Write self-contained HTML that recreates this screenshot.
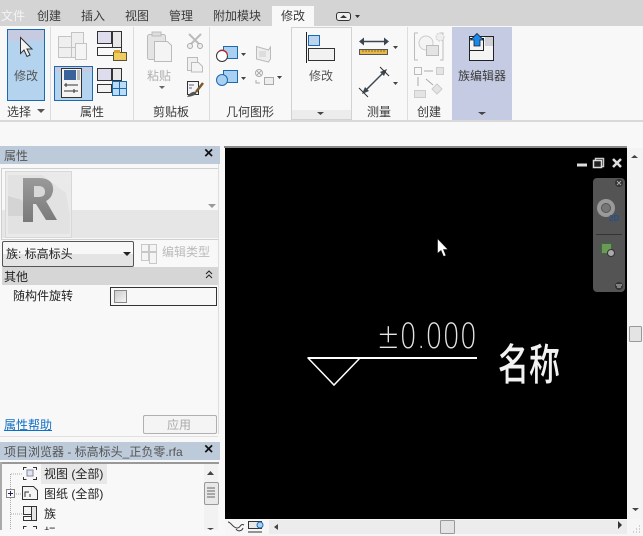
<!DOCTYPE html>
<html><head><meta charset="utf-8">
<style>
html,body{margin:0;padding:0;width:643px;height:536px;overflow:hidden;background:#f8f8f8}
body{position:relative;font-family:"Liberation Sans","Noto Sans CJK SC",sans-serif;font-size:12px;color:#333}
.a{position:absolute}
.t{position:absolute;white-space:nowrap;line-height:14px;font-size:12px;color:#3a3a3a}
svg{position:absolute;overflow:visible}
</style></head><body>

<!-- tab bar -->
<div class="a" style="left:0;top:0;width:643px;height:26px;background:#d4d4d4"></div>
<div class="a" style="left:272px;top:6px;width:42px;height:20px;background:#f8f8f8"></div>
<div class="t" style="left:1px;top:9px;color:#f4f4f4">文件</div>
<div class="t" style="left:37px;top:9px">创建</div>
<div class="t" style="left:81px;top:9px">插入</div>
<div class="t" style="left:125px;top:9px">视图</div>
<div class="t" style="left:169px;top:9px">管理</div>
<div class="t" style="left:213px;top:9px">附加模块</div>
<div class="t" style="left:281px;top:9px">修改</div>
<svg style="left:0;top:0" width="643" height="26"><rect x="336.500" y="12.500" width="14" height="8" rx="2.500" fill="#eee" stroke="#333"/><path d="M340 18l3.500-3 3.500 3z" fill="#333"/><path d="M355 15h5l-2.500 3z" fill="#333"/></svg>

<!-- ribbon lines -->
<div class="a" style="left:0;top:120px;width:643px;height:2px;background:#d9d9d9"></div>
<div class="a" style="left:50px;top:27px;width:1px;height:93px;background:#dcdcdc"></div>
<div class="a" style="left:133px;top:27px;width:1px;height:93px;background:#dcdcdc"></div>
<div class="a" style="left:209px;top:27px;width:1px;height:93px;background:#dcdcdc"></div>
<div class="a" style="left:407px;top:27px;width:1px;height:93px;background:#dcdcdc"></div>

<!-- modify button -->
<div class="a" style="left:7px;top:29px;width:36px;height:70px;background:#b3d3ee;border:1px solid #1b69b0"></div>
<div class="a" style="left:8px;top:30px;width:36px;height:11px;background:#c6cbe2"></div>
<svg style="left:0;top:0" width="50" height="70"><path d="M20.500 37.500v16l3.500-3.500 3 6.500 3-1.500-3-6h5z" fill="#f4f4f4" stroke="#333"/></svg>
<div class="t" style="left:14px;top:69px;color:#555">修改</div>
<div class="t" style="left:7px;top:105px">选择</div>
<svg style="left:0;top:0" width="50" height="120"><path d="M37 109h8l-4 4z" fill="#555"/></svg>

<!-- properties panel -->
<div class="a" style="left:54px;top:66px;width:37px;height:33px;background:#b3d3ee;border:1px solid #1b69b0"></div>
<div class="a" style="left:55px;top:67px;width:37px;height:5px;background:#c6cbe2"></div>
<div class="t" style="left:80px;top:105px">属性</div>
<svg style="left:0;top:0" width="135" height="100">
 <g fill="#efefef" stroke="#c4c4c4"><rect x="58.500" y="36.500" width="13" height="11"/><rect x="71.500" y="32.500" width="12" height="15"/><rect x="58.500" y="47.500" width="13" height="10"/><rect x="71.500" y="47.500" width="12" height="10"/><rect x="75.500" y="43.500" width="11" height="16" fill="#f4f4f4"/></g>
 <g stroke="#333" fill="#f2f2f2"><rect x="97.500" y="31.500" width="14" height="12" fill="#dde"/><rect x="112.500" y="31.500" width="9" height="24" fill="#e8e8e8"/><rect x="97.500" y="47.500" width="24" height="8" fill="#f8f8f8"/></g>
 <rect x="113.500" y="52.500" width="13" height="8" fill="#f0cc60" stroke="#553"/><rect x="114" y="50" width="6" height="3" fill="#d9a630"/>
 <rect x="61.500" y="68.500" width="20" height="29" fill="#f4f4f4" stroke="#333"/><rect x="64" y="70" width="12" height="10" fill="#3a639b"/><rect x="77" y="70" width="3" height="10" fill="#bbb"/><path d="M64 85h14M66 83v4M64 91h14M74 89v4" stroke="#333" fill="none"/>
 <g stroke="#333" fill="#f2f2f2"><rect x="97.500" y="68.500" width="14" height="12" fill="#dde"/><rect x="112.500" y="68.500" width="9" height="12" fill="#e8e8e8"/><rect x="97.500" y="84.500" width="14" height="8"/></g>
 <g fill="#bcdcf4" stroke="#1b69b0"><rect x="112.500" y="81.500" width="7" height="7"/><rect x="119.500" y="81.500" width="7" height="7"/><rect x="112.500" y="88.500" width="7" height="7"/><rect x="119.500" y="88.500" width="7" height="7"/></g>
</svg>

<!-- clipboard -->
<svg style="left:0;top:0" width="210" height="100">
 <rect x="147.500" y="34.500" width="18" height="25" rx="2" fill="#e4e4e4" stroke="#bbb"/><rect x="152" y="32" width="9" height="4" fill="#ddd" stroke="#bbb"/><path d="M154.500 41.500h13l4 4v16h-17z" fill="#f4f4f4" stroke="#bbb"/>
 <path d="M159 86h6l-3 3z" fill="#666"/>
 <path d="M189 34l12 12M201 34l-12 12" stroke="#bbb" stroke-width="2" fill="none"/><circle cx="190" cy="46" r="2.500" fill="#eee" stroke="#aaa"/><circle cx="200" cy="46" r="2.500" fill="#eee" stroke="#aaa"/>
 <rect x="187.500" y="57.500" width="10" height="13" fill="#f0f0f0" stroke="#bbb"/><path d="M191.500 62.500h7l4 4v5.500h-11z" fill="#f4f4f4" stroke="#bbb"/>
 <rect x="187.500" y="81.500" width="11" height="13" fill="#f4f4f4" stroke="#333"/><path d="M189 85h5M189 88h3" stroke="#668" fill="none"/><path d="M203 83l-7 9" stroke="#7a5a30" stroke-width="2.500" fill="none"/><path d="M187 97c2-3 5-6 9-5 1 2-1 4-9 5z" fill="#555"/>
</svg>
<div class="t" style="left:147px;top:69px;color:#b0b0b0">粘贴</div>
<div class="t" style="left:153px;top:105px">剪贴板</div>

<!-- geometry -->
<svg style="left:0;top:0" width="290" height="100">
 <rect x="223.500" y="46.500" width="14" height="12" fill="#a9d0f0" stroke="#1b69b0"/><circle cx="222" cy="56" r="5.500" fill="#fff" stroke="#333"/><path d="M219 51a5.500 5.500 0 0 1 8.500 5" stroke="#d22" fill="none"/>
 <rect x="223.500" y="70.500" width="14" height="12" fill="#a9d0f0" stroke="#1b69b0"/><circle cx="222" cy="80" r="5.500" fill="#a9d0f0" stroke="#1b69b0"/>
 <path d="M241 53h5l-2.500 3zM241 77h5l-2.500 3zM277 76h5l-2.500 3z" fill="#444"/>
 <path d="M256.500 46.500l12 3.500 2-3v12l-2 3-12-3z" fill="#eee" stroke="#bbb"/><rect x="259" y="51" width="7" height="6" fill="#ddd"/>
 <circle cx="259" cy="73" r="3.500" fill="none" stroke="#aaa"/><path d="M257 71l4 4M261 71l-4 4" stroke="#aaa"/><rect x="264.500" y="77.500" width="9" height="7" fill="#eee" stroke="#aaa"/><path d="M256 80v3h4" stroke="#aaa" fill="none"/>
</svg>
<div class="t" style="left:226px;top:105px">几何图形</div>

<!-- modify large -->
<div class="a" style="left:291px;top:27px;width:59px;height:91px;background:#f8f8f8;border:1px solid #d2d2d2"></div>
<div class="a" style="left:292px;top:110px;width:59px;height:9px;background:#ececec"></div>
<svg style="left:0;top:0" width="360" height="120">
 <path d="M306.500 32v31" stroke="#222" fill="none"/>
 <rect x="308.500" y="35.500" width="11" height="10" fill="#bcd4ee" stroke="#1b69b0"/>
 <rect x="308.500" y="48.500" width="26" height="12" fill="#f2f2f2" stroke="#333"/>
 <path d="M317 112h7l-3.500 3z" fill="#444"/>
</svg>
<div class="t" style="left:309px;top:69px;color:#555">修改</div>

<!-- measure -->
<svg style="left:0;top:0" width="410" height="120">
 <path d="M361 41.500h26" stroke="#3a4652" stroke-width="1.500" fill="none"/><path d="M359 41.500l5-4v8zM389 41.500l-5-4v8z" fill="#3a4652"/>
 <rect x="359.500" y="49.500" width="28" height="5" fill="#e7b94a" stroke="#555"/><path d="M363 50v2M366 50v2M369 50v2M372 50v2M375 50v2M378 50v2M381 50v2M384 50v2" stroke="#8a6a20"/>
 <path d="M393 46h5l-2.500 3zM393 82h5l-2.500 3z" fill="#444"/>
 <path d="M365 91l19-19" stroke="#3a4652" stroke-width="1.500" fill="none"/><path d="M362 94l3-7 4 4zM387 69l-3 7-4-4z" fill="#3a4652"/>
 <path d="M359 88l9 9M380 67l9 9" stroke="#333" fill="none"/>
</svg>
<div class="t" style="left:367px;top:105px">测量</div>

<!-- create -->
<svg style="left:0;top:0" width="450" height="100">
 <path d="M418 33h-3.500v27h3.500M440 33h3v27h-3" stroke="#bbb" fill="none"/>
 <circle cx="426" cy="43" r="7" fill="#f4f4f4" stroke="#ccc"/><rect x="426.500" y="45.500" width="12" height="10" fill="#e4e4e4" stroke="#bbb"/><circle cx="440" cy="37" r="4" fill="#eee" stroke="#ccc" stroke-dasharray="2 1"/>
 <rect x="414.500" y="67.500" width="7" height="7" fill="#f8f8f8" stroke="#bbb"/><path d="M424 71h9" stroke="#aaa"/><rect x="436.500" y="67.500" width="7" height="7" fill="#e4e4e4" stroke="#ccc"/><path d="M418 77v9M426 79l7 6" stroke="#aaa"/>
 <rect x="414.500" y="90.500" width="11" height="7" fill="#e4e4e4" stroke="#ccc"/><path d="M437 84l5 5-5 5-5-5z" fill="#e4e4e4" stroke="#ccc"/>
</svg>
<div class="t" style="left:417px;top:105px">创建</div>

<!-- family editor -->
<div class="a" style="left:452px;top:27px;width:60px;height:93px;background:#c5cbe3"></div>
<svg style="left:0;top:0" width="520" height="120">
 <rect x="469.500" y="36.500" width="24" height="24" fill="#f4f4f4" stroke="#222"/><rect x="485" y="37" width="8" height="9" fill="#cfcfd6"/>
 <rect x="469.500" y="38.500" width="14" height="12" fill="#f4f4f4" stroke="#222"/>
 <path d="M477 33.500l6.500 6.500h-3.500v6h-6v-6h-3.500z" fill="#1e88e8" stroke="#123" stroke-width=".8"/>
 <path d="M478 112h8l-4 3z" fill="#444"/>
</svg>
<div class="t" style="left:458px;top:69px">族编辑器</div>

<!-- left panel -->
<div class="a" style="left:0;top:146px;width:220px;height:18px;background:#bccada"></div>
<div class="t" style="left:4px;top:149px;color:#555">属性</div>
<div class="t" style="left:204px;top:147px;font-size:16px;color:#111;font-weight:bold">×</div>
<div class="a" style="left:1px;top:168px;width:216px;height:70px;background:#f8f8f8;border:1px solid #d0d0d0"></div>
<div class="a" style="left:2px;top:210px;width:216px;height:28px;background:#e6e6e6"></div>
<div class="a" style="left:5px;top:171px;width:65px;height:65px;background:#eaeaea;border:1px solid #d8d8d8"></div>
<svg style="left:0;top:0" width="225" height="240">
 <defs><linearGradient id="rg" x1="0" y1="0" x2="0" y2="1"><stop offset="0" stop-color="#9a9a9a"/><stop offset="1" stop-color="#7a7a7a"/></linearGradient></defs>
 <path d="M8 175l34 0 24 18 4 22v19H8z" fill="#e2e2e2"/><path d="M8 196l14 4 6 16H8z" fill="#d4d4d4"/>
 <path d="M23 178h16c11 0 15 6 14 13-1 5-3 8-7 10l11 19h-11l-10-16-3 0v18h-10z" fill="url(#rg)"/><path d="M34 186h4c5 0 7 2 7 6s-3 5-7 5h-4z" fill="#d8d8d8"/>
 <path d="M208 204h8l-4 4z" fill="#999"/>
</svg>
<div class="a" style="left:2px;top:241px;width:130px;height:24px;background:linear-gradient(#f8f8f8 50%,#e4e4e4 50%);border:1px solid #555;border-radius:2px"></div>
<div class="t" style="left:6px;top:247px;color:#222">族: 标高标头</div>
<div class="t" style="left:162px;top:245px;color:#bbb">编辑类型</div>
<div class="a" style="left:2px;top:267px;width:216px;height:18px;background:#d6d6d6"></div>
<div class="t" style="left:4px;top:270px;color:#222">其他</div>
<svg style="left:0;top:0" width="225" height="290">
 <path d="M123 252h8l-4 4z" fill="#222"/>
 <g fill="#f4f4f4" stroke="#c8c8c8"><rect x="141.500" y="244.500" width="7" height="7"/><rect x="149.500" y="244.500" width="7" height="7"/><rect x="141.500" y="252.500" width="7" height="8"/><rect x="149.500" y="252.500" width="7" height="11"/></g>
 <path d="M206 274l3-3 3 3M206 278l3-3 3 3" stroke="#222" fill="none"/>
</svg>
<div class="t" style="left:13px;top:289px;color:#222">随构件旋转</div>
<div class="a" style="left:110px;top:287px;width:105px;height:17px;border:1px dotted #000;background:#f8f8f8;outline:1px solid #333;outline-offset:-1px"></div>
<div class="a" style="left:114px;top:290px;width:11px;height:11px;border:1px solid #888;background:linear-gradient(135deg,#ccc,#f4f4f4)"></div>
<div class="a" style="left:218px;top:164px;width:1px;height:270px;background:#ddd"></div>
<div class="a" style="left:0;top:436px;width:218px;height:1px;background:#e0e0e0"></div>

<div class="t" style="left:4px;top:418px;color:#0f6fc6;text-decoration:underline">属性帮助</div>
<div class="a" style="left:143px;top:415px;width:72px;height:17px;border:1px solid #b0b0b0;border-radius:2px;background:#f4f4f4"></div>
<div class="t" style="left:167px;top:418px;color:#aaa">应用</div>

<!-- browser -->
<div class="a" style="left:0;top:442px;width:220px;height:18px;background:#bccada"></div>
<div class="t" style="left:4px;top:445px;color:#555">项目浏览器 - 标高标头_正负零.rfa</div>
<div class="t" style="left:204px;top:443px;font-size:16px;color:#111;font-weight:bold">×</div>
<div class="a" style="left:0;top:462px;width:219px;height:2px;background:#999"></div>
<div class="a" style="left:0;top:462px;width:2px;height:68px;background:#aaa"></div>
<div class="a" style="left:41px;top:464px;width:66px;height:20px;background:#e8e8e8"></div>
<div class="t" style="left:44px;top:467px;color:#222">视图 (全部)</div>
<div class="t" style="left:44px;top:487px;color:#222">图纸 (全部)</div>
<div class="t" style="left:44px;top:507px;color:#222">族</div>
<div class="t" style="left:44px;top:526px;color:#222">标</div>
<svg style="left:0;top:0" width="225" height="536">
 <path d="M10.500 474v56M11 474h12M16 494h7M11 514h12" stroke="#aaa" stroke-dasharray="1 1" fill="none"/>
 <rect x="6.500" y="489.500" width="8" height="8" fill="#f8f8f8" stroke="#888"/><path d="M8 493.500h5M10.500 491v5" stroke="#225"/>
 <path d="M23.500 470v-2.500h3M33 467.500h3.500v2.500M23.500 477v2.500h3M33 479.500h3.500v-2.500" stroke="#333" fill="none"/><rect x="27" y="470" width="6" height="6" fill="#e0e4f0" stroke="#889"/>
 <path d="M22.500 486.500h11l4 4v9h-15z" fill="#f4f4f4" stroke="#333"/><path d="M25 497v-5h4M30 497v-3" stroke="#333" fill="none"/>
 <rect x="23.500" y="506.500" width="8" height="8" fill="#f4f4f4" stroke="#333"/><rect x="31.500" y="506.500" width="5" height="14" fill="#e4e4e4" stroke="#333"/><path d="M23.500 516.500h8v4h-8z" fill="none" stroke="#333"/>
 <path d="M23.500 529v-2.500h3M33 526.500h3.500v2.500" stroke="#333" fill="none"/>
</svg>
<div class="a" style="left:0;top:530px;width:225px;height:6px;background:#f8f8f8"></div>
<div class="a" style="left:204px;top:464px;width:14px;height:66px;background:#f2f2f2"></div>
<svg style="left:0;top:0" width="225" height="536"><path d="M207 475l3.500-4 3.500 4z" fill="#444"/><path d="M207 528h7l-3.500 2z" fill="#444"/></svg>
<div class="a" style="left:204px;top:482px;width:13px;height:21px;border:1px solid #999;border-radius:2px;background:#e8e8e8"></div>
<svg style="left:0;top:0" width="225" height="510"><path d="M207 488h8M207 491h8M207 494h8M207 497h8" stroke="#666"/></svg>

<!-- canvas -->
<div class="a" style="left:224px;top:146px;width:403px;height:2px;background:#8a8a8a"></div>
<div class="a" style="left:225px;top:148px;width:402px;height:371px;background:#000"></div>
<svg style="left:0;top:0" width="643" height="536">
 <path d="M577 165h10" stroke="#ddd" stroke-width="3"/>
 <rect x="595.500" y="158.500" width="8" height="8" fill="none" stroke="#ccc" stroke-width="1.500"/><rect x="593.500" y="160.500" width="8" height="7" fill="#222" stroke="#ddd" stroke-width="1.500"/>
 <path d="M613 159l8 8M621 159l-8 8" stroke="#ddd" stroke-width="2.500"/>
 <rect x="593" y="178" width="32" height="114" rx="4" fill="#545454"/>
 <circle cx="619" cy="183" r="4" fill="#333"/><path d="M617 181l4 4M621 181l-4 4" stroke="#aaa"/>
 <circle cx="606" cy="208" r="9" fill="#9a9a9a"/><circle cx="606" cy="208" r="4.500" fill="#777" stroke="#555"/>
 <text x="609" y="221" font-size="8" font-weight="bold" fill="#26508a" font-family="Liberation Sans">2D</text>
 <path d="M596 234.500h26" stroke="#333"/>
 <rect x="601.500" y="243.500" width="10" height="10" fill="#6a9a55" stroke="#3d6a3a"/><circle cx="611" cy="253" r="3.500" fill="#aaa" stroke="#333"/>
 <circle cx="619" cy="286" r="4" fill="#333"/><path d="M616 285h6M617 287h4" stroke="#ccc"/>
 <!-- cursor -->
 <path d="M437.500 238.500v15l3.500-3 2.500 6 2.500-1-2.500-6h4.500z" fill="#fff" stroke="#111" stroke-width=".6"/>
 <!-- level symbol -->
 <path d="M307.500 358H477" stroke="#fff" stroke-width="2" fill="none"/>
 <path d="M308 358l26 27 26-27" stroke="#fff" stroke-width="1.500" fill="none"/>
 <text x="377" y="348" font-size="35" fill="#e4e4e4" font-family="DejaVu Sans" textLength="100" lengthAdjust="spacingAndGlyphs" style="font-weight:200">±0.000</text>
 <text transform="translate(498 380) scale(1 1.4)" font-size="31" font-weight="500" fill="#f2f2f2" font-family="Noto Sans CJK SC">名称</text>
</svg>

<!-- right scrollbar -->
<div class="a" style="left:627px;top:148px;width:16px;height:371px;background:#f4f4f4"></div>
<svg style="left:0;top:0" width="643" height="536">
 <path d="M631 158l3.500-3 3.500 3z" fill="#444"/><path d="M632 508h7l-3.500 3z" fill="#444"/>
 <rect x="629.500" y="326.500" width="12" height="15" fill="#e4e4e4" stroke="#999" rx="1"/>
</svg>

<!-- bottom bar -->
<div class="a" style="left:225px;top:519px;width:418px;height:17px;background:#f6f6f6"></div>
<div class="a" style="left:269px;top:520px;width:358px;height:14px;background:#ececec"></div>
<svg style="left:0;top:0" width="643" height="536">
 <path d="M228 522c3 0 5 6 9 6s3-5 7-3M236 529c2 3 6 2 7-1" stroke="#333" fill="none"/>
 <rect x="248.500" y="521.500" width="13" height="7" fill="#e8e8e8" stroke="#333"/><path d="M248 532h14" stroke="#333"/><circle cx="260" cy="525" r="3" fill="#a9d0f0" stroke="#1b69b0"/>
 <path d="M278 524v6l-4-3z" fill="#444"/><path d="M618 521v8l4-4z" fill="#333"/>
 <rect x="440.500" y="520.500" width="14" height="13" fill="#e4e4e4" stroke="#999" rx="1"/>
 <path d="M636 532h1M633 532h1M639 532h1M639 529h1M636 529h1M639 526h1" stroke="#aaa"/>
</svg>

</body></html>
